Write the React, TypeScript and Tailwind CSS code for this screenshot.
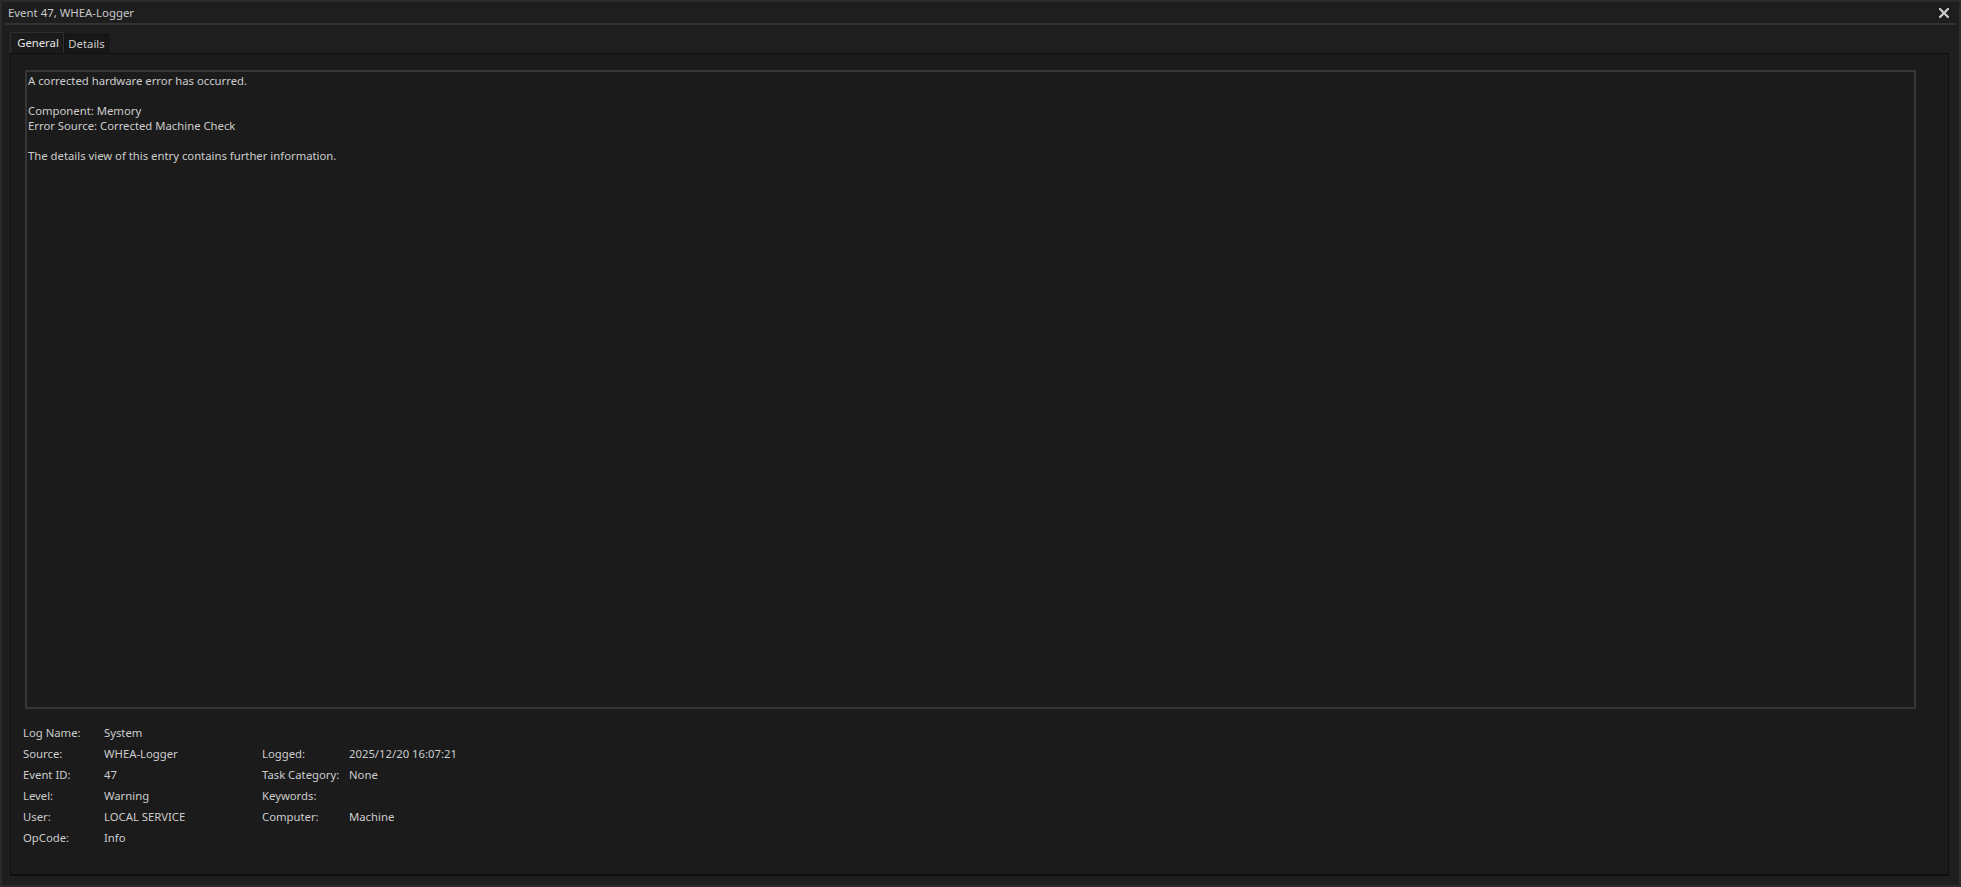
import React from 'react';

const info: [string, string, string, string][] = [
  ['Log Name:', 'System', '', ''],
  ['Source:', 'WHEA-Logger', 'Logged:', '2025/12/20 16:07:21'],
  ['Event ID:', '47', 'Task Category:', 'None'],
  ['Level:', 'Warning', 'Keywords:', ''],
  ['User:', 'LOCAL SERVICE', 'Computer:', 'Machine'],
  ['OpCode:', 'Info', '', ''],
];

const App: React.FC = () => {
  return (
    <div
      className="w-[1961px] h-[887px] overflow-hidden flex flex-col border-2 border-[#2b2b2b] bg-[#1e1e1e] text-[11.3px] text-[#cccccc]"
      style={{ fontFamily: '"Noto Sans", "Open Sans", sans-serif' }}
    >
      {/* Title bar */}
      <div className="h-[21px] flex items-center justify-between pl-[6px] pr-[10px]">
        <span className="text-[#c8c8c8] text-[11.4px]">Event 47, WHEA-Logger</span>
        <svg width="10" height="10" viewBox="0 0 10 10" className="mt-[1px]">
          <path d="M1 1 L9 9 M9 1 L1 9" stroke="#cfcfcf" strokeWidth="2.2" strokeLinecap="square" />
        </svg>
      </div>
      <div className="mx-[3px] h-[2px] bg-[#333333]" />

      {/* Tabs */}
      <div className="flex items-end pl-[8px] pt-[7px]">
        <div className="h-[21px] w-[54px] pl-[2px] justify-center flex items-center border border-b-0 border-[#2e2e2e] bg-[#1b1b1b] text-[#e6e6e6]">
          General
        </div>
        <div className="h-[19px] w-[45px] justify-center flex items-center border border-b-0 border-[#111111] bg-[#171717]">
          Details
        </div>
      </div>

      {/* Tab panel */}
      <div className="flex-1 min-h-0 flex flex-col ml-[8px] mr-[10px] mb-[9px] border border-b-2 border-[#0f0f0f] bg-[#1b1b1b] pt-[16px] pb-[25px]">
        <div className="flex-1 ml-[14px] mr-[32px] border-2 border-[#363636] bg-[#1b1b1b] px-[1px] pt-[1px] leading-[15px]">
          <div>A corrected hardware error has occurred.</div>
          <div>&nbsp;</div>
          <div>Component: Memory</div>
          <div>Error Source: Corrected Machine Check</div>
          <div>&nbsp;</div>
          <div>The details view of this entry contains further information.</div>
        </div>

        <div className="mt-[14px] ml-[12px] grid grid-cols-[81px_158px_87px_1fr]">
          {info.map(([l1, v1, l2, v2]) => (
            <React.Fragment key={l1}>
              <div className="h-[21px] flex items-center">{l1}</div>
              <div className="h-[21px] flex items-center">{v1}</div>
              <div className="h-[21px] flex items-center">{l2}</div>
              <div className="h-[21px] flex items-center">{v2}</div>
            </React.Fragment>
          ))}
        </div>
      </div>
    </div>
  );
};

export default App;
